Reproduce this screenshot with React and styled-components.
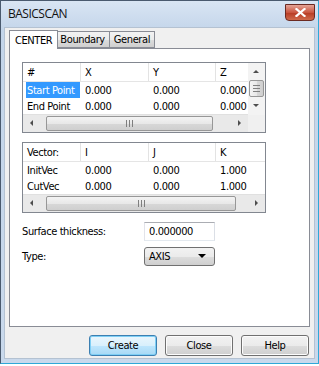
import React from 'react';
import styled, { createGlobalStyle } from 'styled-components';

const GlobalStyle = createGlobalStyle`
  body {
    margin: 0;
    font-family: Tahoma, "DejaVu Sans Condensed", "Liberation Sans", sans-serif;
    font-size: 11px;
    letter-spacing: -0.4px;
    color: #000;
  }
`;

const Window = styled.div`
  width: 319px;
  height: 364px;
  box-sizing: border-box;
  display: flex;
  flex-direction: column;
  background: linear-gradient(#d9e5f3, #c3d5ea 30px, #c9d9ec);
  border: 1px solid #4a5a6e;
  border-right-color: #2fa8d8;
  border-bottom-color: #2fa8d8;
`;

const TitleBar = styled.div`
  height: 26px;
  display: flex;
  align-items: flex-start;
  justify-content: space-between;
  padding: 0 3px 0 7px;
`;

const Title = styled.div`
  font-family: "Open Sans", "Liberation Sans", sans-serif;
  font-size: 12px;
  letter-spacing: -0.5px;
  margin-top: 4px;
  color: #111;
`;

const CloseButton = styled.div`
  width: 30px;
  height: 17px;
  margin-top: 3px;
  border: 1px solid #6b2a22;
  border-radius: 0 0 4px 4px;
  box-sizing: border-box;
  background: linear-gradient(#e5a497, #c9553f 50%, #b63a23 51%, #cf6a4c);
  display: flex;
  align-items: center;
  justify-content: center;
`;

const Client = styled.div`
  flex: 1;
  margin: 0 3px 4px 3px;
  background: #f0f0f0;
  border: 1px solid #b4c2d2;
  display: flex;
  flex-direction: column;
  padding: 0 4px 0 4px;
`;

const TabStrip = styled.div`
  display: flex;
  align-items: flex-end;
  height: 20px;
  padding-left: 1px;
`;

const Tab = styled.div`
  height: ${p => (p.$active ? '19px' : '17px')};
  margin: ${p => (p.$active ? '0 -2px -1px -1px' : '0')};
  padding: 0 ${p => (p.$active ? '5px' : '4px')};
  box-sizing: border-box;
  display: flex;
  align-items: center;
  border: 1px solid #898c95;
  border-bottom: ${p => (p.$active ? 'none' : '1px solid #898c95')};
  border-left: ${p => (p.$first || p.$active ? '1px solid #898c95' : 'none')};
  background: ${p => (p.$active ? '#fff' : 'linear-gradient(#f2f2f2, #ebebeb 50%, #dddddd 51%, #cfcfcf)')};
  position: relative;
  z-index: ${p => (p.$active ? 2 : 1)};
`;

const Panel = styled.div`
  height: 279px;
  box-sizing: border-box;
  background: #fff;
  border: 1px solid #898c95;
  padding: 13px 12px 0 12px;
  display: flex;
  flex-direction: column;
`;

const Grid = styled.div`
  width: 244px;
  box-sizing: border-box;
  border: 1px solid #828790;
  background: #fff;
  display: flex;
  margin-bottom: ${p => p.$gap || 0}px;
`;

const GridBody = styled.div`
  flex: 1;
  min-width: 0;
  display: flex;
  flex-direction: column;
`;

const Row = styled.div`
  display: grid;
  grid-template-columns: ${p => p.$cols};
  height: ${p => (p.$header ? 18 : 16)}px;
  align-items: center;
  border-bottom: ${p => (p.$header ? '1px solid #e5e5e5' : 'none')};
  overflow: hidden;
`;

const Cell = styled.div`
  height: 100%;
  display: flex;
  align-items: center;
  padding-left: ${p => p.$pad ?? 4}px;
  white-space: nowrap;
  overflow: hidden;
  border-right: ${p => (p.$header ? '1px solid #e3e3e3' : 'none')};
  background: ${p => (p.$selected ? '#3399ff' : 'transparent')};
  color: ${p => (p.$selected ? '#fff' : '#000')};
  margin: ${p => (p.$selected ? '0 1px 0 3px' : '0')};
`;

const HScroll = styled.div`
  height: 17px;
  display: flex;
  align-items: center;
  background: #e9e9e9;
  border-top: 1px solid #e0e0e0;
`;

const ArrowBox = styled.div`
  width: 17px;
  height: 17px;
  display: flex;
  align-items: center;
  justify-content: center;
  flex-shrink: 0;
`;

const Thumb = styled.div`
  height: 15px;
  width: ${p => p.$w}px;
  box-sizing: border-box;
  border: 1px solid #979797;
  border-radius: 2px;
  background: linear-gradient(#f3f3f3, #e8e8e8 50%, #d8d8d8 51%, #cfcfcf);
  display: flex;
  align-items: center;
  justify-content: center;
`;

const Track = styled.div`
  flex: 1;
  display: flex;
  align-items: center;
`;

const VScroll = styled.div`
  width: 17px;
  display: flex;
  flex-direction: column;
  align-items: center;
  background: #f3f3f3;
`;

const VThumb = styled.div`
  width: 15px;
  height: 17px;
  box-sizing: border-box;
  border: 1px solid #979797;
  border-radius: 2px;
  background: linear-gradient(90deg, #f3f3f3, #e8e8e8 50%, #d8d8d8 51%, #cfcfcf);
  display: flex;
  align-items: center;
  justify-content: center;
`;

const Corner = styled.div`
  height: 17px;
  width: 17px;
  background: #f0f0f0;
`;

const FieldRow = styled.div`
  display: flex;
  align-items: center;
  height: ${p => p.$h}px;
  margin-top: ${p => p.$mt}px;
`;

const Label = styled.div`
  width: 122px;
`;

const TextInput = styled.div`
  width: 71px;
  height: 19px;
  box-sizing: border-box;
  border: 1px solid #abadb3;
  border-left-color: #e2e3ea;
  border-right-color: #dbdfe6;
  border-bottom-color: #e3e9ef;
  padding-left: 4px;
  display: flex;
  align-items: center;
`;

const Combo = styled.div`
  width: 71px;
  height: 19px;
  box-sizing: border-box;
  border: 1px solid #707070;
  border-radius: 3px;
  background: linear-gradient(#f2f2f2, #ebebeb 50%, #dddddd 51%, #cfcfcf);
  padding: 0 8px 0 4px;
  display: flex;
  align-items: center;
  justify-content: space-between;
`;

const ButtonBar = styled.div`
  display: flex;
  justify-content: flex-end;
  gap: 8px;
  padding-top: 8px;
  padding-right: 1px;
`;

const Button = styled.div`
  width: 68px;
  height: 21px;
  box-sizing: border-box;
  border: 1px solid ${p => (p.$default ? '#3c7fb1' : '#707070')};
  border-radius: 3px;
  background: ${p =>
    p.$default
      ? 'linear-gradient(#eaf6fd, #d9f0fc 50%, #bee6fd 51%, #a7d9f5)'
      : 'linear-gradient(#f2f2f2, #ebebeb 50%, #dddddd 51%, #cfcfcf)'};
  box-shadow: ${p => (p.$default ? 'inset 0 0 0 1px #7ecff5' : 'inset 0 0 0 1px #fcfcfc')};
  display: flex;
  align-items: center;
  justify-content: center;
`;

const Tri = ({ dir }) => {
  const pts = {
    left: '5,0 5,6 2,3',
    right: '2,0 2,6 5,3',
    up: '0,5 6,5 3,2',
    down: '0,2 6,2 3,5',
  }[dir];
  return (
    <svg width="7" height="7" viewBox="0 0 7 7">
      <polygon points={pts} fill="#4d4d4d" />
    </svg>
  );
};

const Grip = ({ vertical }) =>
  vertical ? (
    <svg width="9" height="9" viewBox="0 0 9 9">
      {[1, 4, 7].map(y => (
        <line key={y} x1="1" y1={y + 0.5} x2="8" y2={y + 0.5} stroke="#7f7f7f" />
      ))}
    </svg>
  ) : (
    <svg width="9" height="9" viewBox="0 0 9 9">
      {[1, 4, 7].map(x => (
        <line key={x} x1={x + 0.5} y1="1" x2={x + 0.5} y2="8" stroke="#7f7f7f" />
      ))}
    </svg>
  );

const HScrollBar = ({ left, width }) => (
  <HScroll>
    <ArrowBox><Tri dir="left" /></ArrowBox>
    <Track>
      <div style={{ width: left }} />
      <Thumb $w={width}><Grip /></Thumb>
    </Track>
    <ArrowBox><Tri dir="right" /></ArrowBox>
  </HScroll>
);

const cols = '58px 68px 67px 1fr';

export default function App() {
  return (
    <>
      <GlobalStyle />
      <Window>
        <TitleBar>
          <Title>BASICSCAN</Title>
          <CloseButton>
            <svg width="11" height="9" viewBox="0 0 11 9">
              <path d="M1.5 1 L9.5 8 M9.5 1 L1.5 8" stroke="#fff" strokeWidth="2.2" strokeLinecap="square" />
            </svg>
          </CloseButton>
        </TitleBar>
        <Client>
          <TabStrip>
            <Tab $active $first>CENTER</Tab>
            <Tab>Boundary</Tab>
            <Tab>General</Tab>
          </TabStrip>
          <Panel>
            <Grid $gap={9}>
              <GridBody>
                <Row $header $cols={cols}>
                  <Cell $header>#</Cell>
                  <Cell $header>X</Cell>
                  <Cell $header>Y</Cell>
                  <Cell>Z</Cell>
                </Row>
                <Row $cols={cols}>
                  <Cell $selected $pad={1}>Start Point</Cell>
                  <Cell>0.000</Cell>
                  <Cell>0.000</Cell>
                  <Cell>0.000</Cell>
                </Row>
                <Row $cols={cols}>
                  <Cell>End Point</Cell>
                  <Cell>0.000</Cell>
                  <Cell>0.000</Cell>
                  <Cell>0.000</Cell>
                </Row>
                <HScrollBar left={6} width={167} />
              </GridBody>
              <VScroll>
                <ArrowBox><Tri dir="up" /></ArrowBox>
                <VThumb><Grip vertical /></VThumb>
                <ArrowBox><Tri dir="down" /></ArrowBox>
                <div style={{ flex: 1 }} />
                <Corner />
              </VScroll>
            </Grid>
            <Grid>
              <GridBody>
                <Row $header $cols={cols}>
                  <Cell $header>Vector:</Cell>
                  <Cell $header>I</Cell>
                  <Cell $header>J</Cell>
                  <Cell>K</Cell>
                </Row>
                <Row $cols={cols}>
                  <Cell>InitVec</Cell>
                  <Cell>0.000</Cell>
                  <Cell>0.000</Cell>
                  <Cell>1.000</Cell>
                </Row>
                <Row $cols={cols}>
                  <Cell>CutVec</Cell>
                  <Cell>0.000</Cell>
                  <Cell>0.000</Cell>
                  <Cell>1.000</Cell>
                </Row>
                <HScrollBar left={6} width={190} />
              </GridBody>
            </Grid>
            <FieldRow $h={19} $mt={9}>
              <Label>Surface thickness:</Label>
              <TextInput>0.000000</TextInput>
            </FieldRow>
            <FieldRow $h={19} $mt={6}>
              <Label>Type:</Label>
              <Combo>
                <span>AXIS</span>
                <svg width="8" height="5" viewBox="0 0 8 5">
                  <polygon points="0,0 8,0 4,4" fill="#000" />
                </svg>
              </Combo>
            </FieldRow>
          </Panel>
          <ButtonBar>
            <Button $default>Create</Button>
            <Button>Close</Button>
            <Button>Help</Button>
          </ButtonBar>
        </Client>
      </Window>
    </>
  );
}
